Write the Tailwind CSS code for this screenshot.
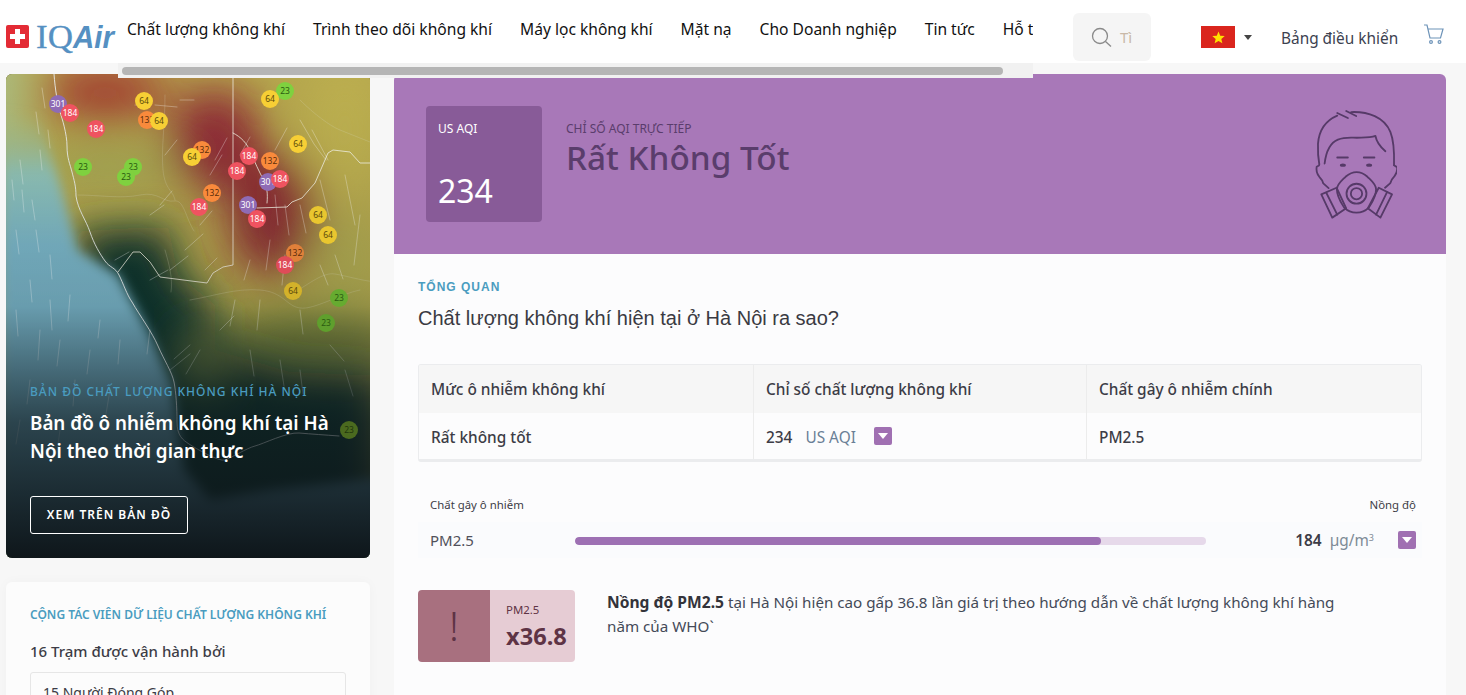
<!DOCTYPE html>
<html lang="vi">
<head>
<meta charset="utf-8">
<title>IQAir</title>
<script src="https://cdn.jsdelivr.net/npm/@tailwindcss/browser@4"></script>
</head>
<body class="bg-[#f7f7f7] font-['Noto_Sans',sans-serif] text-[#3c3c46]">
<div class="relative h-[695px] w-[1466px] overflow-hidden">
  <header class="flex h-[63px] items-start bg-white">
    <div class="ml-[6px] mt-[22px] flex w-[112px] items-start">
      <svg class="overflow-visible" width="112" height="36" viewBox="0 0 112 36">
        <rect x="0" y="3" width="23" height="23" rx="2" fill="#e32b35"/>
        <path d="M9 7h5v5h5v5h-5v5H9v-5H4v-5h5z" fill="#fff"/>
        <text x="30" y="26" font-family="Liberation Serif" font-size="34" fill="#5590c2" stroke="#5590c2" stroke-width=".3" textLength="37" lengthAdjust="spacingAndGlyphs">IQ</text>
        <text x="67" y="26" font-family="Liberation Sans" font-weight="700" font-style="italic" font-size="31" fill="#5590c2" textLength="41" lengthAdjust="spacingAndGlyphs">Air</text>
      </svg>
    </div>
    <nav class="mt-[19px] flex w-[915px] gap-[28px] overflow-hidden whitespace-nowrap pl-[9px] text-[15.6px] leading-[21px] text-[#111]">
      <span>Chất lượng không khí</span>
      <span>Trình theo dõi không khí</span>
      <span>Máy lọc không khí</span>
      <span>Mặt nạ</span>
      <span>Cho Doanh nghiệp</span>
      <span>Tin tức</span>
      <span>Hỗ trợ</span>
    </nav>
    <div class="ml-[40px] mt-[13px] flex h-[48px] w-[78px] items-center rounded-md bg-[#f5f5f5] pl-[18px]">
      <svg width="21" height="21" viewBox="0 0 21 21" fill="none" stroke="#8a8a8a" stroke-width="1.3"><circle cx="9" cy="9" r="7.5"/><path d="M14.5 14.5l5.5 5"/></svg>
      <span class="ml-[8px] text-[15px] text-[#c9b9a8]">Tì</span>
    </div>
    <div class="ml-[50px] mt-[26px] h-[22px] w-[34px] bg-[#da251d] flex items-center justify-center">
      <svg width="13" height="13" viewBox="0 0 24 24"><path d="M12 1l3.2 7.6 8.3.7-6.3 5.4 1.9 8.1L12 18.5l-7.1 4.3 1.9-8.1L.5 9.3l8.3-.7z" fill="#ffe000"/></svg>
    </div>
    <div class="ml-[9px] mt-[35px] h-0 w-0 border-x-[4.5px] border-t-[5px] border-x-transparent border-t-[#444]"></div>
    <span class="ml-[29px] mt-[28px] whitespace-nowrap text-[15.4px] leading-[21px] text-[#3c4150]">Bảng điều khiển</span>
    <svg class="ml-[25px] mt-[24px]" width="21" height="21" viewBox="0 0 21 21" fill="none" stroke="#6d93b8" stroke-width="1.2"><path d="M1 1h3l3 13h10.5L20 5H5"/><circle cx="8" cy="18" r="1.4"/><circle cx="16.5" cy="18" r="1.4"/></svg>
  </header>

  <div class="absolute left-[118px] top-[63px] z-10 h-[15px] w-[915px] bg-[#f1f1f1] pl-[4px] pt-[4px]">
    <div class="h-[8px] w-[881px] rounded-full bg-[#b5b5b5]"></div>
  </div>

  <main class="mt-[11px] flex items-start pl-[6px]">
    <aside class="flex w-[364px] flex-col gap-[24px]">
      <section class="relative h-[484px] overflow-hidden rounded-md bg-[#222]">
        <svg class="absolute inset-0" width="364" height="484" viewBox="6 74 364 484">
          <defs>
            <filter id="b" x="-40%" y="-40%" width="180%" height="180%"><feGaussianBlur stdDeviation="22"/></filter>
            <filter id="s" x="-20%" y="-20%" width="140%" height="140%"><feGaussianBlur stdDeviation="20"/></filter>
            <filter id="o" x="-20%" y="-20%" width="140%" height="140%"><feGaussianBlur stdDeviation="6"/></filter>
            <filter id="l"><feGaussianBlur stdDeviation=".45"/></filter>
            <linearGradient id="fade" x1="0" y1="0" x2="0" y2="1">
              <stop offset="0" stop-color="#0f1a1e" stop-opacity="0"/>
              <stop offset=".48" stop-color="#0f1a1e" stop-opacity=".1"/>
              <stop offset=".72" stop-color="#0f1a1e" stop-opacity=".68"/>
              <stop offset="1" stop-color="#0d1418" stop-opacity=".98"/>
            </linearGradient>
            <linearGradient id="oc" x1="0" y1="0" x2="0" y2="1">
              <stop offset="0" stop-color="#9cc49a" stop-opacity="0"/>
              <stop offset=".14" stop-color="#8ec0b4"/>
              <stop offset=".3" stop-color="#78b2c4"/>
              <stop offset="1" stop-color="#5b8ea6"/>
            </linearGradient>
          </defs>
          <rect x="6" y="74" width="364" height="484" fill="#b5a64d"/>
          <g filter="url(#b)">
            <rect x="-30" y="40" width="50" height="110" fill="#a9c088"/>
            <ellipse cx="105" cy="92" rx="62" ry="30" fill="#a23f33"/>
            <ellipse cx="215" cy="140" rx="46" ry="52" fill="#8f2c34"/>
            <ellipse cx="272" cy="215" rx="44" ry="62" fill="#8a2a30"/>
            <ellipse cx="110" cy="165" rx="70" ry="18" fill="#9fa552"/>
            <ellipse cx="345" cy="130" rx="40" ry="70" fill="#bdb050"/>
            <ellipse cx="345" cy="260" rx="35" ry="50" fill="#aca74f"/>
            <ellipse cx="310" cy="340" rx="90" ry="30" fill="#6f7e38"/>
          </g>
          <g filter="url(#s)">
            <path d="M70 232L168 226L178 275L215 305L215 350L290 372L380 376V560H140L90 300z" fill="#0f322c"/>
          </g>
          <ellipse cx="205" cy="360" rx="28" ry="34" fill="#66743a" filter="url(#b)"/>
          <g filter="url(#o)">
            <path d="M0 110L40 120L62 190L78 250L118 275L148 330L172 385L184 470L210 500L270 490L380 478V560H0z" fill="url(#oc)"/>
          </g>
          <g filter="url(#l)" fill="none" stroke-linejoin="round" stroke-linecap="round">
            <path d="M54 74c1 15 4 32 6 38s7 22 7 34 3 18 5 26 4 14 4 24c2 14 10 24 14 36s10 22 15 29 10 6 14 14 8 20 13 27c8 14 20 30 26 44s14 26 16 36 3 26 3 40 6 18 12 22 30 18 36 16 22-12 30-14 32-14 44-13 26 2 40 3" stroke="#eef2f2" stroke-width="1" opacity=".85"/>
            <path d="M233 74v191l-10 2-10 6-6 10-47-6-10-15-10-10h-7l-15 20" stroke="#ece9dc" stroke-width="1" opacity=".8"/>
            <path d="M233 133c8 4 14 10 18 20s8 18 12 26 5 14 4 24" stroke="#f4f2e4" stroke-width="1" opacity=".8"/>
            <path d="M257 208l30-1 5-5 10-4 13-15 13-30 5-3 17 2 10 11h10" stroke="#f4f2e4" stroke-width="1" opacity=".8"/>
            <path d="M78 195c20 0 44 4 62 0s24 8 34 6 12 18 20 30 M165 250c4 14 8 28 6 42M165 95c0 30-4 55-2 75s10 20 12 30M300 100c14 14 30 26 40 30s20 8 30 12M295 292c14-8 28-20 40-18s24 6 40 8M190 300c24-4 46-12 70-10s26 16 40 18 40-14 60-18" stroke="#dcdcc0" stroke-width=".7" opacity=".32"/>
            <path d="M42 88l3 20M36 112l3 22M48 130l2 18M40 150l2 20M20 160l3 24M12 180l2 20M22 190l2 22M32 200l3 20M16 230l3 24M36 230l3 22M50 255l2 24M30 280l2 22M50 300l2 30M70 295l-2 26M16 310l2 26M100 320l-2 18M60 340l-3 26M40 330l-2 30M90 350l-3 24M120 340l-2 24M30 380l-3 24M75 380l-2 26M110 390l-4 24M20 420l-4 24M60 430l-3 22M150 330l-3 24M135 105h16M155 105l22 2M180 100h14M300 120l14 24 12 16M312 130l16 30M240 155l10-18M275 150l12-22M215 160l12-22M210 175l12-20M165 155l12-15M160 205l12-14M200 225l12-14M185 250l18-16M150 215l14-10M115 260l14-8M150 280l18-10M170 270l18-14M205 270l12-12M275 195l3 30M285 205l4 30M300 205l6 28M320 180l10 40M345 175l10 50M360 215l-6 50M250 260l-6 20M270 240l-4 30M285 255l-3 30M320 265l8 20M335 255l8 24M235 300l-5 26M260 300l-3 30M300 310l3 24M220 330l14-14M190 345l-16 14M170 370l20-16M200 350l-14 24M250 350l4 26M280 360l4 26M300 370l3 24M330 345l14 16M345 370l8 26" stroke="#fff" stroke-width="1" opacity=".3"/>
          </g>
          <rect x="6" y="74" width="364" height="484" fill="url(#fade)"/>
          <g font-family="Noto Sans" font-size="8.5" text-anchor="middle">
            <circle cx="58" cy="104" r="9" fill="#8f6bb5"/>
            <circle cx="70" cy="113" r="9" fill="#ef5360"/><circle cx="96" cy="129" r="9" fill="#ef5360"/>
            <text x="58" y="107" fill="#fff">301</text><text x="70" y="116" fill="#fff">184</text><text x="96" y="132" fill="#fff">184</text>
            <circle cx="144" cy="101" r="9" fill="#f7cf35"/><text x="144" y="104" fill="#5c4a0a">64</text>
            <circle cx="147" cy="120" r="9" fill="#f98a3c"/><text x="147" y="123" fill="#5c2f0a">132</text>
            <circle cx="159" cy="121" r="9" fill="#f7cf35"/><text x="159" y="124" fill="#5c4a0a">64</text>
            <circle cx="83" cy="167" r="9" fill="#7fd13f"/><text x="83" y="170" fill="#2b5c10">23</text>
            <circle cx="133" cy="167" r="9" fill="#7fd13f"/><text x="133" y="170" fill="#2b5c10">23</text>
            <circle cx="126" cy="177" r="9" fill="#7fd13f"/><text x="126" y="180" fill="#2b5c10">23</text>
            <circle cx="202" cy="150" r="9" fill="#f98a3c"/><text x="202" y="153" fill="#5c2f0a">132</text>
            <circle cx="192" cy="157" r="9" fill="#f7cf35"/><text x="192" y="160" fill="#5c4a0a">64</text>
            <circle cx="285" cy="91" r="9" fill="#7fd13f"/><text x="285" y="94" fill="#2b5c10">23</text>
            <circle cx="270" cy="99" r="9" fill="#f7cf35"/><text x="270" y="102" fill="#5c4a0a">64</text>
            <circle cx="298" cy="144" r="9" fill="#f7cf35"/><text x="298" y="147" fill="#5c4a0a">64</text>
            <circle cx="249" cy="156" r="9" fill="#ef5360"/><text x="249" y="159" fill="#fff">184</text>
            <circle cx="270" cy="161" r="9" fill="#f98a3c"/><text x="270" y="164" fill="#5c2f0a">132</text>
            <circle cx="237" cy="171" r="9" fill="#ef5360"/><text x="237" y="174" fill="#fff">184</text>
            <circle cx="268" cy="182" r="9" fill="#8f6bb5"/><text x="268" y="185" fill="#fff">301</text>
            <circle cx="280" cy="179" r="9" fill="#ef5360"/><text x="280" y="182" fill="#fff">184</text>
            <circle cx="212" cy="193" r="9" fill="#f98a3c"/><text x="212" y="196" fill="#5c2f0a">132</text>
            <circle cx="199" cy="207" r="9" fill="#ef5360"/><text x="199" y="210" fill="#fff">184</text>
            <circle cx="248" cy="205" r="9" fill="#8f6bb5"/><text x="248" y="208" fill="#fff">301</text>
            <circle cx="257" cy="219" r="9" fill="#ef5360"/><text x="257" y="222" fill="#fff">184</text>
            <circle cx="318" cy="215" r="9" fill="#e9c62f"/><text x="318" y="218" fill="#5c4a0a">64</text>
            <circle cx="328" cy="235" r="9" fill="#e9c62f"/><text x="328" y="238" fill="#5c4a0a">64</text>
            <circle cx="295" cy="253" r="9" fill="#e0803a"/><text x="295" y="256" fill="#5c2f0a">132</text>
            <circle cx="285" cy="265" r="9" fill="#df4c58"/><text x="285" y="268" fill="#fff">184</text>
            <circle cx="293" cy="291" r="9" fill="#d3b22a"/><text x="293" y="294" fill="#5c4a0a">64</text>
            <circle cx="339" cy="298" r="9" fill="#66ab30"/><text x="339" y="301" fill="#2b5c10">23</text>
            <circle cx="326" cy="323" r="9" fill="#5f9f2d"/><text x="326" y="326" fill="#2b5c10">23</text>
            <circle cx="349" cy="430" r="9" fill="#4b6a1f"/><text x="349" y="433" fill="#22360c">23</text>
          </g>
        </svg>
        <div class="absolute left-[24px] top-[309px] w-[316px]">
          <p class="whitespace-nowrap text-[12px] font-medium uppercase leading-[18px] tracking-[1px] text-[#4a9cc0]">Bản đồ chất lượng không khí Hà Nội</p>
          <h2 class="mt-[8px] text-[18.8px] font-semibold leading-[28px] text-white">Bản đồ ô nhiễm không khí tại Hà Nội theo thời gian thực</h2>
          <a class="mt-[31px] flex h-[38px] w-[158px] items-center justify-center rounded-[3px] border border-white text-[12px] font-semibold tracking-[1px] text-white">XEM TRÊN BẢN ĐỒ</a>
        </div>
      </section>
      <section class="h-[200px] rounded-md bg-[#fcfcfc] px-[24px] pt-[24px] shadow-[0_0_12px_rgba(0,0,0,0.03)]">
        <p class="whitespace-nowrap text-[12px] font-semibold leading-[18px] text-[#4a9cc0]">CỘNG TÁC VIÊN DỮ LIỆU CHẤT LƯỢNG KHÔNG KHÍ</p>
        <p class="mt-[16px] text-[15px] font-medium leading-[22px]">16 Trạm được vận hành bởi</p>
        <div class="mt-[10px] h-[60px] rounded-[3px] border border-[#e6e6e6] px-[12px] pt-[9px] text-[14px]">15 Người Đóng Góp</div>
      </section>
    </aside>

    <section class="ml-[24px] h-[640px] w-[1052px] overflow-hidden rounded-md bg-[#fcfcfd]">
      <div class="flex h-[180px] bg-[#a878b8] pl-[32px] pt-[32px]">
        <div class="flex h-[116px] w-[116px] flex-col justify-between rounded bg-[#885b98] px-[12px] pb-[9px] pt-[14px] text-white">
          <span class="text-[12px] leading-[18px]">US AQI</span>
          <span class="text-[32px] leading-[44px]">234</span>
        </div>
        <div class="ml-[24px] pt-[14px] text-[#5a3d6c]">
          <p class="text-[12px] leading-[18px]">CHỈ SỐ AQI TRỰC TIẾP</p>
          <h1 class="mt-[-3px] text-[33.3px] font-medium leading-[44px]">Rất Không Tốt</h1>
        </div>
        <svg class="ml-auto mr-[49px] mt-[2px]" width="83" height="113" viewBox="100 55 250 340" fill="none" stroke="#563a68" stroke-width="5.5" stroke-linecap="round" stroke-linejoin="round">
          <path d="M170 70l32 15M197 64l30 15M212 67c50-2 100 15 118 60 12 30 12 65 11 100"/>
          <path d="M170 78c-35 15-55 45-58 85-1 25 1 45 4 62"/>
          <path d="M115 228l-7 4c-2 10 2 22 8 30 6 6 10 12 12 20l16 14"/>
          <path d="M342 228l8 5c2 10-2 20-8 28-6 6-10 12-12 20l-16 14"/>
          <path d="M132 222c4-34 16-62 40-72 26-10 44-4 70-6 14 0 30 0 43-5 4 20 16 34 30 46"/>
          <path d="M170 204h32M250 204h32"/>
          <ellipse cx="187" cy="227" rx="9" ry="5" fill="#563a68" stroke="none"/><ellipse cx="266" cy="227" rx="9" ry="5" fill="#563a68" stroke="none"/>
          <path d="M195 262c12-10 22-14 33-14s22 4 33 14c10 10 26 22 26 38 0 22-14 42-22 55-10 10-22 15-37 15s-27-5-37-15c-8-13-22-33-22-55 0-16 16-28 26-38z"/>
          <circle cx="228" cy="313" r="30"/><circle cx="228" cy="313" r="17"/>
          <path d="M122 315l46-20 29 62-42 28zM335 315l-40-20-33 62 38 28z"/>
          <path d="M137 310l33 66M320 308l-33 68"/>
        </svg>
      </div>
      <div class="px-[24px] pt-[25px]">
        <p class="font-['Liberation_Sans',sans-serif] text-[12px] font-bold leading-[16px] tracking-[1px] text-[#4a9cc0]">TỔNG QUAN</p>
        <h2 class="mt-[9px] font-['Liberation_Sans',sans-serif] text-[20px] leading-[28px] text-[#3a3a42]">Chất lượng không khí hiện tại ở Hà Nội ra sao?</h2>
        <div class="mt-[32px] h-[98px] w-[1004px] overflow-hidden rounded-[3px] border border-b-[3px] border-[#ebecee] text-[15.4px] font-medium">
          <div class="grid h-[48px] grid-cols-[335px_333px_1fr] bg-[#f6f6f6] leading-[50px]">
            <div class="border-r border-[#ececec] pl-[12px]">Mức ô nhiễm không khí</div>
            <div class="border-r border-[#ececec] pl-[12px]">Chỉ số chất lượng không khí</div>
            <div class="pl-[12px]">Chất gây ô nhiễm chính</div>
          </div>
          <div class="grid h-[46px] grid-cols-[335px_333px_1fr] leading-[50px]">
            <div class="border-r border-[#ececec] pl-[12px]">Rất không tốt</div>
            <div class="flex items-start border-r border-[#ececec] pl-[12px]">
              <span>234</span>
              <span class="ml-[13px] font-normal text-[#6a7f96]">US AQI</span>
              <span class="ml-[18px] mt-[14px] flex h-[18px] w-[18px] items-center justify-center rounded-[2px] bg-[#a070b2]"><span class="h-0 w-0 border-x-[5px] border-t-[6px] border-x-transparent border-t-white"></span></span>
            </div>
            <div class="pl-[12px]">PM2.5</div>
          </div>
        </div>
        <div class="mt-[34px] flex justify-between px-[12px] pr-[6px] text-[11.4px] leading-[18px]">
          <span>Chất gây ô nhiễm</span><span>Nồng độ</span>
        </div>
        <div class="mt-[8px] flex h-[36px] items-center bg-[#fafbfd] pl-[12px] pr-[6px]">
          <span class="w-[145px] text-[15px] text-[#50505a]">PM2.5</span>
          <div class="mt-[2px] h-[8px] w-[631px] overflow-hidden rounded-full bg-[#e6d9ea]"><div class="h-full w-[526px] rounded-full bg-[#9d70b3]"></div></div>
          <span class="ml-auto pt-[1px] text-[15.4px] font-semibold">184</span>
          <span class="ml-[8px] pt-[1px] text-[15.4px] text-[#7d8a96]">µg/m<sup class="text-[9px]">3</sup></span>
          <span class="ml-[24px] flex h-[18px] w-[18px] items-center justify-center rounded-[2px] bg-[#a070b2]"><span class="h-0 w-0 border-x-[5px] border-t-[6px] border-x-transparent border-t-white"></span></span>
        </div>
        <div class="mt-[32px] flex items-start">
          <div class="flex h-[72px] w-[157px] overflow-hidden rounded">
            <div class="flex w-[72px] items-center justify-center bg-[#a8707f] text-[40px] font-light text-[#5e3345]">!</div>
            <div class="flex-1 bg-[#e6ccd4] pl-[16px] pt-[12px] text-[#5e3345]">
              <p class="text-[11.4px] leading-[16px]">PM2.5</p>
              <p class="mt-[4px] text-[23.6px] font-bold leading-[28px]">x36.8</p>
            </div>
          </div>
          <p class="ml-[32px] w-[740px] text-[15.2px] leading-[24px] text-[#444a58]"><b class="text-[15.6px] font-bold leading-[24px] text-[#33333a]">Nồng độ PM2.5</b> tại Hà Nội hiện cao gấp 36.8 lần giá trị theo hướng dẫn về chất lượng không khí hàng năm của WHO`</p>
        </div>
      </div>
    </section>
  </main>
</div>
</body>
</html>
